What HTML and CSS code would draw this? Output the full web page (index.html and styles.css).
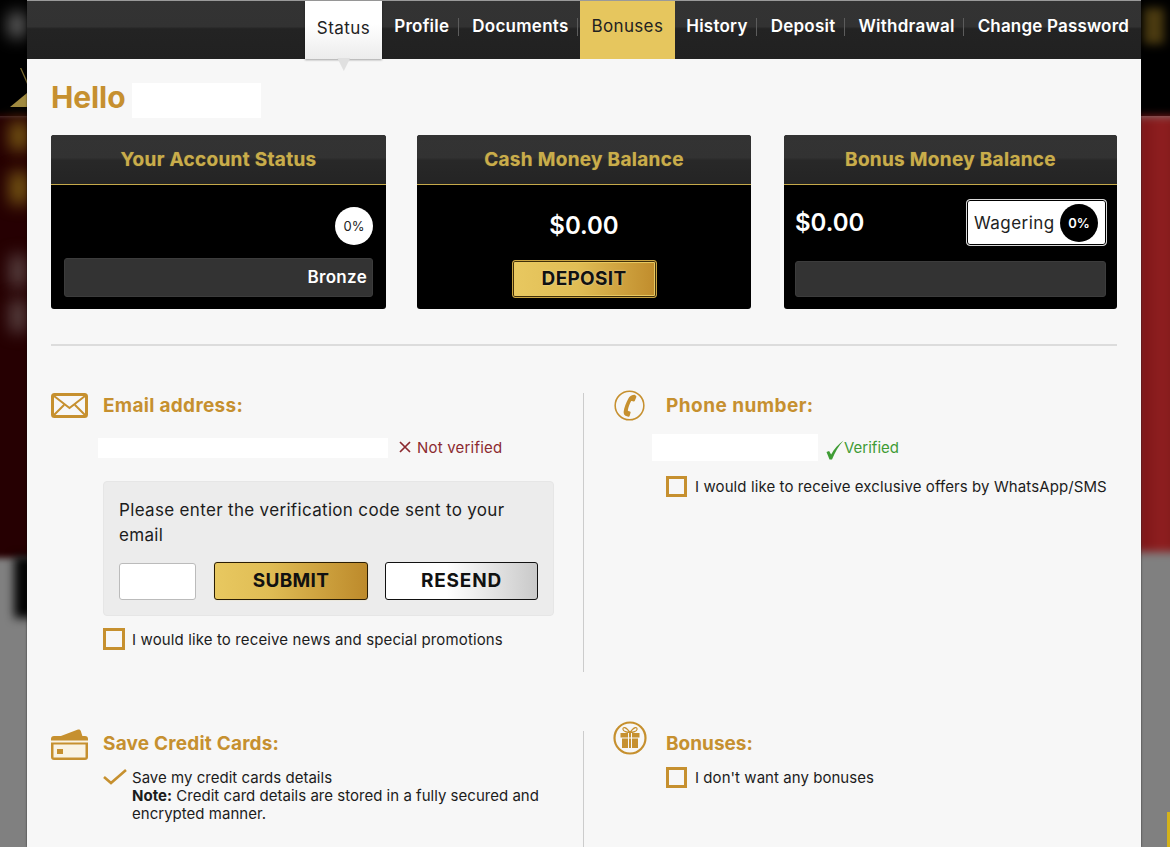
FILE: index.html
```html
<!DOCTYPE html>
<html lang="en">
<head>
<meta charset="utf-8">
<title>My Account</title>
<link rel="stylesheet" href="styles.css">
</head>
<body>
<div class="backdrop" aria-hidden="true">
  <div class="bg-black"></div>
  <div class="bg-red-left"></div>
  <div class="bg-red-right"></div>
  <div class="bg-bar"></div>
  <div class="bg-blob bg-blob-a"></div>
  <div class="bg-blob bg-blob-b"></div>
  <div class="bg-blob bg-blob-c"></div>
  <div class="bg-blob bg-blob-d"></div>
  <div class="bg-blob bg-blob-e"></div>
  <div class="bg-logo"></div>
  <div class="bg-logo-line"></div>
  <div class="bg-gold"></div>
  <div class="bg-yellow"></div>
</div>
<main class="modal">
  <nav class="tabs">
    <a class="tab tab-active">Status</a>
    <a class="tab tab-sep">Profile</a>
    <a class="tab tab-sep">Documents</a>
    <a class="tab tab-gold">Bonuses</a>
    <a class="tab tab-sep">History</a>
    <a class="tab tab-sep">Deposit</a>
    <a class="tab tab-sep">Withdrawal</a>
    <a class="tab tab-last">Change Password</a>
  </nav>
  <div class="content">
    <h1 class="hello">Hello <span class="redact redact-name"></span></h1>
    <section class="cards">
      <article class="card">
        <h2 class="card-title">Your Account Status</h2>
        <div class="card-body status-body">
          <span class="pct">0%</span>
          <div class="bar bar-status">Bronze</div>
        </div>
      </article>
      <article class="card">
        <h2 class="card-title">Cash Money Balance</h2>
        <div class="card-body cash-body">
          <div class="amount">$0.00</div>
          <button class="btn btn-deposit">DEPOSIT</button>
        </div>
      </article>
      <article class="card">
        <h2 class="card-title">Bonus Money Balance</h2>
        <div class="card-body bonus-body">
          <div class="bonus-top">
            <div class="amount">$0.00</div>
            <div class="wager">Wagering <span class="pct pct-dark">0%</span></div>
          </div>
          <div class="bar bar-bonus"></div>
        </div>
      </article>
    </section>
    <hr class="rule">
    <section class="details">
      <div class="panel panel-left panel-email">
        <header class="panel-head">
          <svg class="icon icon-mail" viewBox="0 0 37 25" width="37" height="25"><rect x="1.5" y="1.5" width="34" height="22" rx="2" fill="none" stroke="#c6902f" stroke-width="3"/><path d="M3 3l15.500 12L34 3M3 22l10-10M34 22L24 12" fill="none" stroke="#c6902f" stroke-width="2"/></svg>
          <h3 class="panel-title">Email address:</h3>
        </header>
        <div class="email-row">
          <span class="redact redact-email"></span>
          <span class="bad"><svg viewBox="0 0 12 12" width="12" height="12"><path d="M1 1l10 10M11 1L1 11" stroke="#8c2a30" stroke-width="1.700"/></svg>Not verified</span>
        </div>
        <div class="verify">
          <p class="verify-text">Please enter the verification code sent to your email</p>
          <div class="verify-row">
            <input class="code" type="text" aria-label="Code">
            <button class="btn btn-submit">SUBMIT</button>
            <button class="btn btn-resend">RESEND</button>
          </div>
        </div>
        <label class="check check-news"><span class="box"></span>I would like to receive news and special promotions</label>
      </div>
      <div class="panel panel-right panel-phone">
        <header class="panel-head">
          <svg class="icon icon-round icon-phone" viewBox="0 0 32 32" width="31" height="31"><circle cx="16" cy="16" r="14.800" fill="none" stroke="#c6902f" stroke-width="1.600"/><path d="M21.500 5c-3 .1-5.500 1.500-6.800 4-2.300 4.300-4.200 9.200-4.700 13.300-.2 2 .4 3.600 1.800 4.200l3 1c.8.200 1.200-.2 1.400-.9l.9-3c.2-.7 0-1.100-.6-1.300l-1.800-.7c-.4-.2-.5-.4-.4-.9.600-2.900 1.800-6.300 3.300-9 .2-.4.500-.5.900-.4l1.800.5c.6.100 1-.1 1.200-.7l1.500-3.700c.3-.8-.2-1.400-.5-1.400z" fill="#c6902f"/></svg>
          <h3 class="panel-title">Phone number:</h3>
        </header>
        <div class="phone-row">
          <span class="redact redact-phone"></span>
          <span class="good"><svg viewBox="0 0 18 20" width="18" height="20"><path d="M.5 12l2.600-1 2 3.600C8 9 12.500 4 17.500 .5 12.500 6 9 12 6 19.500H3.500z" fill="#3f9c35"/></svg>Verified</span>
        </div>
        <label class="check check-offers"><span class="box box-right"></span>I would like to receive exclusive offers by WhatsApp/SMS</label>
      </div>
      <div class="panel panel-left panel-cards">
        <header class="panel-head">
          <svg class="icon icon-card" viewBox="0 0 37 31" width="37" height="31"><path d="M2 10L27 .5c1.400-.4 2.400.2 2.800 1.500l2.500 8z" fill="#c6902f"/><rect x="0" y="7" width="37" height="24" rx="3" fill="#c6902f"/><rect x="2.500" y="15.500" width="32" height="13" fill="#f9f3e4"/><rect x="0" y="11.500" width="37" height="2" fill="#f9f3e4"/><rect x="6" y="20" width="6" height="5" fill="#c6902f"/></svg>
          <h3 class="panel-title">Save Credit Cards:</h3>
        </header>
        <div class="saved">
          <svg class="tick" viewBox="0 0 24 16" width="24" height="16"><path d="M1 8l7 6L23 1" fill="none" stroke="#c6902f" stroke-width="2.600"/></svg>
          <p class="saved-text">Save my credit cards details<br><b>Note:</b> Credit card details are stored in a fully secured and encrypted manner.</p>
        </div>
      </div>
      <div class="panel panel-right panel-bonus">
        <header class="panel-head">
          <svg class="icon icon-round icon-gift" viewBox="0 0 34 34" width="34" height="34"><circle cx="17" cy="17" r="15.500" fill="none" stroke="#c6902f" stroke-width="2.200"/><path d="M7.500 12h19v4.500h-19zM9 17.500h16V27H9z" fill="#c6902f"/><path d="M15.500 12v15M18.500 12v15" stroke="#f7f7f7" stroke-width="1"/><path d="M17 11.500C13 5.500 9.500 5.500 10 8.500c.3 1.800 4 3 7 3zm0 0c4-6 7.500-6 7-3-.3 1.800-4 3-7 3z" fill="none" stroke="#c6902f" stroke-width="1.200"/></svg>
          <h3 class="panel-title">Bonuses:</h3>
        </header>
        <label class="check check-nobonus"><span class="box box-right"></span>I don't want any bonuses</label>
      </div>
    </section>
  </div>
</main>
</body>
</html>
```

FILE: styles.css
```css
* { box-sizing: border-box; }
html, body { margin: 0; height: 847px; overflow: hidden; }
body {
  position: relative;
  background: #808080;
  font-family: Inter, "Liberation Sans", sans-serif;
  color: #1c1c1c;
}

/* blurred page behind the dialog */
.backdrop { position: absolute; inset: 0; overflow: hidden; }
.backdrop div { position: absolute; }
.bg-black { left: 0; right: 0; top: 0; height: 116px; background: #000; }
.bg-red-left { left: -10px; width: 44px; top: 114px; height: 444px; background: #260002; filter: blur(3px); }
.bg-red-right { right: -10px; width: 44px; top: 116px; height: 436px; background: linear-gradient(90deg, #7a1416, #8f1f20 60%, #7d1719); filter: blur(4px); }
.bg-bar { left: 14px; width: 22px; top: 556px; height: 62px; background: #050505; filter: blur(5px); }
.bg-blob { filter: blur(8px); }
.bg-blob-a { left: 9px; top: 13px; height: 24px; width: 16px; background: #6a6a6a; }
.bg-blob-b { left: 10px; top: 122px; height: 28px; width: 18px; background: #7a5a14; }
.bg-blob-c { left: 10px; top: 172px; height: 32px; width: 18px; background: #7a5a14; }
.bg-blob-d { left: 10px; top: 255px; height: 32px; width: 16px; background: #5a4444; }
.bg-blob-e { left: 10px; top: 300px; height: 32px; width: 16px; background: #5a4444; }
.bg-logo { left: 10px; top: 93px; width: 17px; height: 14px; background: #a08a40; clip-path: polygon(0 100%, 100% 0, 100% 100%); }
.bg-logo-line { left: 20px; top: 68px; width: 7px; height: 16px; background: #7a6a30; clip-path: polygon(0 0, 20% 0, 100% 80%, 100% 100%); }
.bg-gold { right: 6px; top: 8px; width: 20px; height: 36px; background: #4a3a10; filter: blur(5px); }
.bg-yellow { right: 0; top: 812px; width: 3px; height: 35px; background: #d4b21a; }

/* dialog */
.modal {
  position: relative;
  margin-left: 27px;
  width: 1114px;
  height: 847px;
  background: #f7f7f7;
  box-shadow: 0 0 2px rgba(0,0,0,.6);
  overflow: hidden;
}
.tabs {
  display: flex;
  justify-content: flex-end;
  height: 59px;
  padding-right: .5px;
  border-top: 1px solid #9a9a9a;
  background: linear-gradient(#333 0, #323232 44%, #232323 48%, #212121 100%);
}
.tab {
  position: relative;
  display: flex;
  align-items: center;
  height: 58px;
  padding: 0 11.5px 9px;
  color: #fff;
  font-size: 17px;
  font-weight: 600;
  letter-spacing: .25px;
  white-space: nowrap;
}
.tab-last { letter-spacing: .18px; }
.tab-sep::after {
  content: "";
  position: absolute;
  right: 2px;
  top: 17px;
  height: 18px;
  width: 1px;
  background: #5c5c5c;
}
.tab-active {
  margin-right: 1px;
  color: #222;
  font-weight: 400;
  letter-spacing: .45px;
  background: linear-gradient(#fff 0, #fff 40%, #ececec 100%);
  box-shadow: 0 1px 2px rgba(0,0,0,.35);
  padding-bottom: 5px;
}
.tab-active::after {
  content: "";
  position: absolute;
  left: 32px;
  bottom: -12px;
  width: 13px;
  height: 13px;
  background: #e0e0e0;
  clip-path: polygon(0 0, 100% 0, 50% 100%);
}
.tab-gold { color: #222; font-weight: 400; letter-spacing: .35px; background: #e6c65e; }

.content { padding: 0 24px; }
.hello {
  display: flex;
  align-items: flex-start;
  gap: 7px;
  height: 35px;
  margin: 24px 0 17px;
  color: #c6902f;
  font-size: 30px;
  font-weight: 700;
  line-height: 29px;
  letter-spacing: -.1px;
}
.redact { display: block; background: #fff; }
.redact-name { width: 129px; height: 35px; }

.cards { display: flex; }
.card { flex: none; width: 334px; height: 174px; background: #000; border-radius: 3px; overflow: hidden; }
.card:nth-child(1) { width: 335px; margin-right: 31px; }
.card:nth-child(2) { margin-right: 33px; }
.card:nth-child(3) { width: 333px; }
.card-title {
  height: 50px;
  margin: 0;
  border-bottom: 1px solid #c5a94a;
  background: linear-gradient(#333 0, #323232 46%, #282828 52%, #242424 100%);
  color: #c9ad4a;
  font-size: 19px;
  font-weight: 700;
  line-height: 49px;
  letter-spacing: .3px;
  text-align: center;
  text-shadow: 0 0 1px rgba(201,173,74,.5);
}
.card-body { height: 124px; position: relative; color: #fff; }
.status-body { display: flex; flex-direction: column; align-items: flex-end; padding: 22px 13px 0 13px; }
.pct {
  display: flex;
  align-items: center;
  justify-content: center;
  width: 38px;
  height: 38px;
  border-radius: 50%;
  background: #fff;
  color: #222;
  font-size: 13px;
}
.bar { height: 39px; border-radius: 3px; background: #333; border: 1px solid #3c3c3c; }
.bar-status {
  width: 100%;
  margin-top: 13px;
  padding-right: 5px;
  text-align: right;
  font-size: 17px;
  font-weight: 600;
  letter-spacing: .3px;
  line-height: 36px;
}
.cash-body { display: flex; flex-direction: column; align-items: center; padding-top: 25px; }
.amount { font-size: 24px; font-weight: 600; line-height: 32px; }
.btn {
  font-family: inherit;
  font-size: 19px;
  font-weight: 700;
  letter-spacing: .3px;
  color: #111;
  cursor: pointer;
  border-radius: 3px;
  padding: 0 0 2px;
}
.btn-deposit {
  width: 145px;
  height: 38px;
  margin-top: 18px;
  border: 1px solid #c9a443;
  box-shadow: inset 0 0 0 1px #3f2e08, inset 0 0 0 2px #e8c860;
  background: linear-gradient(90deg, #e8c860, #e0bd55 45%, #c08c2c);
  text-shadow: 0 0 2px rgba(255,255,255,.5);
}
.bonus-body { padding: 14px 11px 0; }
.bonus-top { display: flex; align-items: center; justify-content: space-between; height: 47px; margin-right: -1px; }
.bonus-top .amount { margin-top: 1px; }
.wager {
  display: flex;
  align-items: center;
  justify-content: space-between;
  width: 141px;
  height: 47px;
  padding: 0 8px 0 7px;
  background: #fff;
  color: #222;
  border: 1px solid #d8d8d8;
  box-shadow: inset 0 0 0 1px #000;
  border-radius: 4px;
  font-size: 17px;
  letter-spacing: .45px;
}
.pct-dark { background: #000; color: #fff; font-weight: 600; font-size: 13px; letter-spacing: 0; }
.bar-bonus { margin-top: 15px; height: 36px; }

.rule { height: 2px; margin: 35px 0 47px; border: 0; background: #dcdcdc; }

.details { display: grid; grid-template-columns: 533px 533px; grid-template-rows: 279px auto; row-gap: 59px; }
.panel { position: relative; }
.panel-left { border-right: 1px solid #ccc; padding-right: 29px; }
.panel-right { padding-left: 30px; }
.panel-cards { height: 140px; }
.panel-head { display: flex; align-items: center; height: 25px; }
.icon { flex: none; }
.icon-mail { margin-right: 15px; }
.icon-round { margin-right: 20px; }
.icon-phone { margin-right: 21px; }
.icon-gift { margin: -12px 19px 0 -1px; }
.icon-card { margin-right: 15px; margin-top: 1px; }
.panel-title { margin: 0; color: #c6902f; font-size: 19px; font-weight: 700; letter-spacing: .3px; }
.panel-phone .panel-title { letter-spacing: .45px; }
.panel-cards .panel-title { letter-spacing: .2px; }
.panel-bonus .panel-title { letter-spacing: 0; }

.email-row { display: flex; align-items: center; height: 20px; margin: 20px 0 0 47px; gap: 11px; }
.redact-email { width: 290px; height: 20px; }
.bad { display: flex; align-items: center; gap: 6px; margin-top: -2px; color: #8c2a30; font-size: 15px; letter-spacing: .2px; }
.verify {
  width: 451px;
  height: 135px;
  margin: 23px 0 12px 52px;
  padding: 16px 15px 15px;
  background: #ececec;
  border: 1px solid #e6e6e6;
  border-radius: 4px;
}
.verify-text { margin: 0; font-size: 17px; line-height: 25px; letter-spacing: .33px; }
.verify-row { display: flex; align-items: center; margin-top: 14px; }
.code { width: 77px; height: 37px; margin-right: 18px; background: #fff; border: 1px solid #bbb; border-radius: 3px; }
.btn-submit {
  width: 154px;
  height: 38px;
  margin-right: 17px;
  border: 1px solid #2a1d04;
  background: linear-gradient(90deg, #e8c860, #e0bd55 35%, #bd8a2b);
  box-shadow: 0 0 1px #e8c860;
}
.btn-resend {
  width: 153px;
  height: 38px;
  border: 1px solid #111;
  letter-spacing: .8px;
  background: linear-gradient(90deg, #fff, #fff 40%, #c9c9c9);
}
.check { display: flex; align-items: center; font-size: 15px; letter-spacing: .13px; }
.box { flex: none; width: 22px; height: 22px; margin-right: 7px; border: 3px solid #c6902f; }
.box-right { width: 21px; height: 21px; margin-right: 8px; }
.check-news { margin-left: 52px; }
.phone-row { display: flex; align-items: center; gap: 7px; height: 27px; margin: 16px 0 0 38px; }
.redact-phone { width: 166px; height: 27px; }
.good { display: flex; align-items: center; margin-left: 1px; color: #3f9c35; font-size: 15px; }
.good svg { margin-right: 0; margin-top: 4px; }
.check-offers { margin: 15px 0 0 52px; letter-spacing: .1px; }
.saved { display: flex; margin: 13px 0 0 52px; }
.tick { flex: none; margin: 0 5px 0 0; }
.saved-text { margin: 0; font-size: 15px; line-height: 18px; letter-spacing: .02px; }
.check-nobonus { margin: 11px 0 0 52px; letter-spacing: .05px; }
```
